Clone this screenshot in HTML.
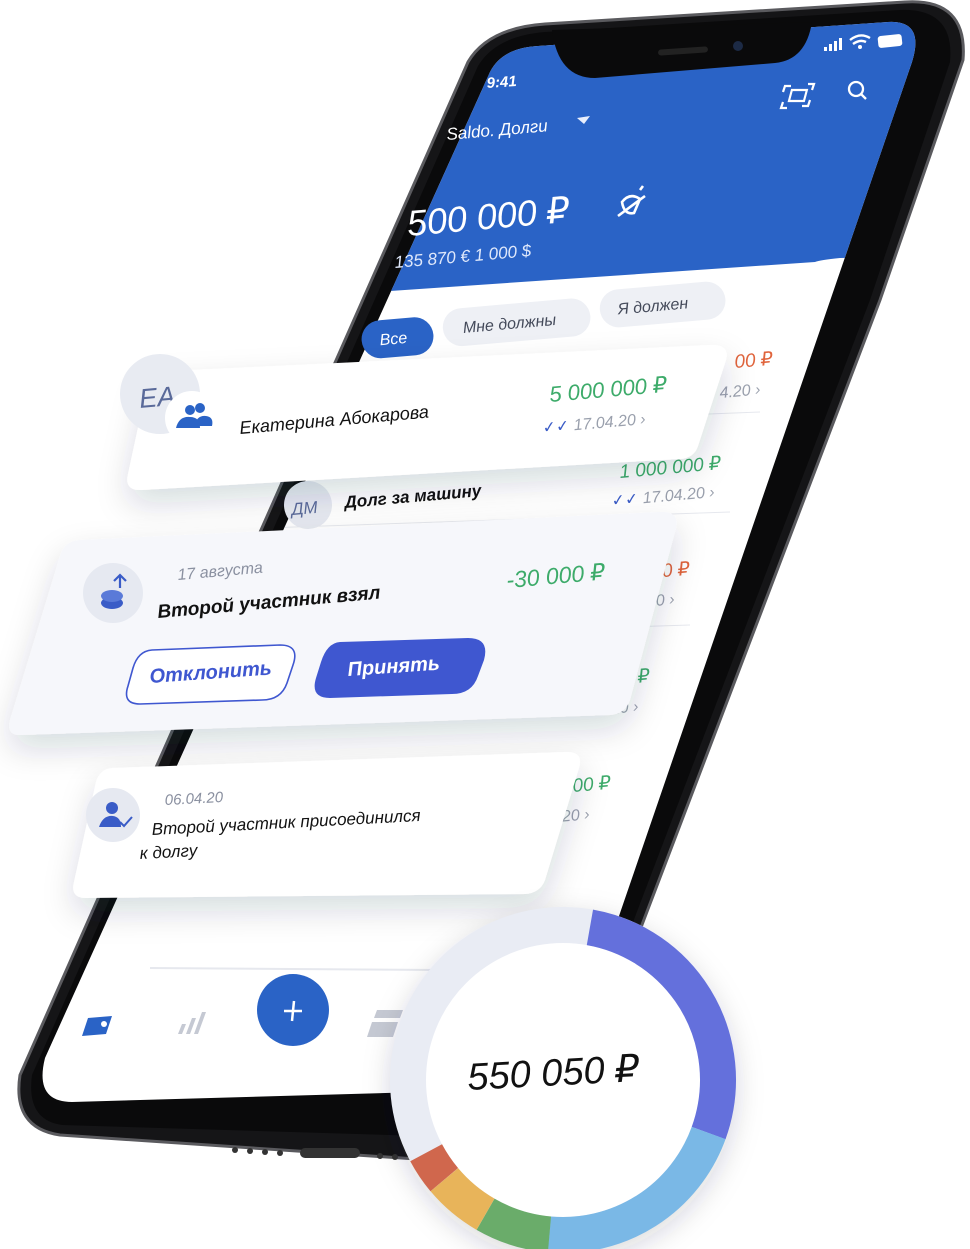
<!DOCTYPE html>
<html><head><meta charset="utf-8"><style>
html,body{margin:0;padding:0;background:#fff;width:970px;height:1249px;overflow:hidden}
svg text{font-family:"Liberation Sans","DejaVu Sans",sans-serif;font-style:italic}
</style></head><body>
<svg width="970" height="1249" viewBox="0 0 970 1249" xmlns="http://www.w3.org/2000/svg">
<defs>
<filter id="sh" x="-20%" y="-30%" width="140%" height="170%"><feDropShadow dx="0" dy="14" stdDeviation="16" flood-color="#1a2040" flood-opacity="0.16"/></filter>
<filter id="sh2" x="-20%" y="-20%" width="140%" height="140%"><feDropShadow dx="0" dy="8" stdDeviation="14" flood-color="#1a2040" flood-opacity="0.18"/></filter>
<clipPath id="scr"><path d="M490,72 Q502,48 538,46 L888,22 Q925,20 912,62 L560,1088 L72,1102 Q34,1102 45,1058 Z"/></clipPath>
</defs>
<path d="M468,62 Q488,28 545,24 L905,2 Q968,-2 963,60 L880,300 L640,930 L565,1150 Q555,1168 520,1166 L60,1135 Q12,1128 20,1075 Z" fill="#151517" stroke="#5a5a5e" stroke-width="3"/>
<path d="M478,66 Q496,36 545,32 L900,10 Q955,8 950,62 L870,300 L630,930 L555,1140 L62,1125 Q26,1120 32,1075 Z" fill="#0a0a0b"/>
<g fill="#333">
<circle cx="235" cy="1150" r="3"/><circle cx="250" cy="1151" r="3"/><circle cx="265" cy="1152" r="3"/><circle cx="280" cy="1153" r="3"/><rect x="300" y="1148" width="60" height="10" rx="5"/><circle cx="380" cy="1156" r="3"/><circle cx="395" cy="1157" r="3"/>
</g>
<g clip-path="url(#scr)">
<rect x="0" y="0" width="970" height="1249" fill="#ffffff"/>
<path d="M0,0 L970,0 L970,255 L840,258 Q820,260 815,262 L375,292 Q355,294 340,310 L0,330 Z" fill="#2a63c6"/>
<line x1="300" y1="430" x2="760" y2="412" stroke="#e6e8ee"/>
<line x1="265" y1="528" x2="730" y2="512" stroke="#e6e8ee"/>
<line x1="230" y1="640" x2="690" y2="625" stroke="#e6e8ee"/>
<line x1="150" y1="968" x2="440" y2="970" stroke="#e6e8ee" stroke-width="2"/>
</g>
<path d="M552,30 Q558,78 595,78 L775,63 Q806,60 812,22 Z" fill="#0a0a0b"/>
<rect x="658" y="48" width="50" height="6" rx="3" fill="#222" transform="rotate(-4 683 51)"/>
<circle cx="738" cy="46" r="5" fill="#1c2a45"/>
<text x="487" y="88" fill="#fff" font-size="15" font-weight="bold" transform="rotate(-4 487 88)">9:41</text>
<g fill="#fff"><rect x="824" y="47" width="3" height="4"/><rect x="829" y="44" width="3" height="7"/><rect x="834" y="41" width="3" height="10"/><rect x="839" y="38" width="3" height="12"/></g>
<path d="M850,40 Q860,32 870,38 M853,44 Q860,39 866,42" stroke="#fff" stroke-width="2.4" fill="none"/><circle cx="860" cy="47" r="2" fill="#fff"/>
<rect x="878" y="35" width="24" height="12" rx="3" fill="#fff" transform="rotate(-6 890 41)"/>
<g stroke="#fff" stroke-width="2.2" fill="none"><path d="M783,92 l2,-6 h6 M808,84 h6 l-2,6 M810,100 l-2,6 h-6 M787,108 h-6 l2,-6"/><rect x="791" y="90" width="15" height="11" transform="skewX(-15) translate(25 0)"/></g>
<circle cx="856" cy="89" r="7" stroke="#fff" stroke-width="2.3" fill="none"/><line x1="861" y1="94" x2="866" y2="99" stroke="#fff" stroke-width="2.3"/>
<text x="447" y="140" fill="#fff" font-size="17" transform="rotate(-5 447 140)">Saldo. Долги</text>
<path d="M577,118 L590,116 L584,124 Z" fill="#e8eefc"/>
<text x="408" y="236" fill="#fff" font-size="36" transform="rotate(-5 408 236)">500 000 ₽</text>
<g stroke="#fff" stroke-width="2.6" fill="none"><path d="M622,202 q8,-10 18,-3 l-6,14 q-10,2 -12,-11 z"/><line x1="618" y1="216" x2="645" y2="196"/><line x1="640" y1="190" x2="643" y2="186"/></g>
<text x="395" y="268" fill="#dfe8fb" font-size="17" transform="rotate(-5 395 268)">135 870 €   1 000 $</text>
<g transform="rotate(-5 520 315)">
<rect x="360" y="308" width="72" height="38" rx="19" fill="#2a63c6"/>
<text x="378" y="333" fill="#fff" font-size="16">Все</text>
<rect x="442" y="303" width="148" height="38" rx="19" fill="#eef0f5"/>
<text x="462" y="328" fill="#444a5a" font-size="16">Мне должны</text>
<rect x="600" y="298" width="126" height="38" rx="19" fill="#eef0f5"/>
<text x="618" y="323" fill="#444a5a" font-size="16">Я должен</text>
</g>
<g font-size="19">
<text x="735" y="368" fill="#e0643c" transform="rotate(-5 735 368)">00 ₽</text>
<text x="720" y="398" fill="#9aa0ad" font-size="16" transform="rotate(-5 720 398)">4.20  ›</text>
<text x="620" y="478" fill="#3dab6a" transform="rotate(-5 620 478)">1 000 000 ₽</text>
<text x="612" y="506" fill="#9aa0ad" font-size="16" transform="rotate(-5 612 506)"><tspan fill="#3a5cc7">✓✓</tspan> 17.04.20  ›</text>
<circle cx="308" cy="505" r="24" fill="#e6e9f1"/>
<text x="292" y="515" fill="#5a6a9a" font-size="17" transform="rotate(-5 292 515)">ДМ</text>
<text x="345" y="508" fill="#111" font-size="17" font-weight="bold" transform="rotate(-5 345 508)">Долг за машину</text>
<text x="652" y="578" fill="#e0643c" transform="rotate(-5 652 578)">00 ₽</text>
<text x="643" y="607" fill="#9aa0ad" font-size="16" transform="rotate(-5 643 607)">.20  ›</text>
<text x="612" y="685" fill="#3dab6a" transform="rotate(-5 612 685)">00 ₽</text>
<text x="598" y="715" fill="#9aa0ad" font-size="16" transform="rotate(-5 598 715)">4.20  ›</text>
<text x="573" y="792" fill="#3dab6a" transform="rotate(-5 573 792)">00 ₽</text>
<text x="558" y="822" fill="#9aa0ad" font-size="16" transform="rotate(-5 558 822)">.20  ›</text>
</g>
<path d="M88,1018 L112,1016 L106,1034 L82,1036 Z" fill="#2a63c6"/><circle cx="104" cy="1024" r="3" fill="#fff"/>
<g fill="#c5c9d3"><path d="M178,1034 l4,-10 h4 l-4,10 z M186,1034 l6,-16 h4 l-6,16 z M194,1034 l8,-22 h4 l-8,22 z"/></g>
<circle cx="293" cy="1010" r="36" fill="#2a63c6"/>
<path d="M284,1011 h18 M294,1001 l-2,20" stroke="#fff" stroke-width="2.5"/>
<path d="M374,1018 l3,-8 h26 l-3,8 z M372,1022 h26 l-5,15 h-26 z" fill="#c5c9d3"/>
<g filter="url(#sh)">
<path d="M150,372 L710,345 Q730,344 726,360 L698,446 Q694,458 680,459 L142,490 Q124,491 128,474 Z" fill="#fff"/>
</g>
<circle cx="160" cy="394" r="40" fill="#e8ebf2"/>
<text x="140" y="408" fill="#5a6a9a" font-size="27" transform="rotate(-5 140 408)">EA</text>
<circle cx="192" cy="418" r="27" fill="#fff"/>
<g fill="#2a63c6"><circle cx="190" cy="410" r="5"/><circle cx="200" cy="408" r="5"/><path d="M176,428 q3,-12 14,-11 q10,0 10,11 z M194,426 q3,-11 12,-10 q8,1 6,10 z"/></g>
<text x="240" y="434" fill="#111" font-size="18" transform="rotate(-5 240 434)">Екатерина Абокарова</text>
<text x="550" y="402" fill="#3dab6a" font-size="22" transform="rotate(-5 550 402)">5 000 000 ₽</text>
<text x="543" y="433" fill="#9aa0ad" font-size="16" transform="rotate(-5 543 433)"><tspan fill="#3a5cc7">✓✓</tspan>  17.04.20  ›</text>
<g filter="url(#sh)">
<path d="M80,540 L660,512 Q680,511 676,528 L630,700 Q625,714 610,715 L22,735 Q6,736 10,720 L60,556 Q64,541 80,540 Z" fill="#f6f7fb"/>
</g>
<circle cx="113" cy="593" r="30" fill="#e6e9f1"/>
<ellipse cx="112" cy="603" rx="11" ry="6" fill="#3a5cc7"/><ellipse cx="112" cy="596" rx="11" ry="6" fill="#5a7ad8"/>
<path d="M120,588 l0,-12 M114,581 l6,-6 l6,6" stroke="#3a5cc7" stroke-width="2.2" fill="none"/>
<text x="178" y="580" fill="#8a90a0" font-size="16" transform="rotate(-5 178 580)">17 августа</text>
<text x="158" y="618" fill="#111" font-size="19" font-weight="bold" transform="rotate(-5 158 618)">Второй участник взял</text>
<text x="507" y="588" fill="#3dab6a" font-size="23" transform="rotate(-5 507 588)">-30 000 ₽</text>
<path d="M152,650 L280,645 Q300,645 293,665 L287,683 Q281,700 262,700 L140,704 Q122,704 128,686 L133,668 Q138,651 152,650 Z" fill="#fff" stroke="#3f57d0" stroke-width="1.6"/>
<text x="150" y="683" fill="#3f57d0" font-size="20" font-weight="bold" transform="rotate(-4 150 683)">Отклонить</text>
<path d="M340,642 L468,638 Q490,638 484,660 L478,676 Q472,694 452,694 L330,698 Q310,698 316,678 L321,662 Q327,643 340,642 Z" fill="#3f57d0"/>
<text x="348" y="676" fill="#fff" font-size="20" font-weight="bold" transform="rotate(-4 348 676)">Принять</text>
<g filter="url(#sh)">
<path d="M112,768 L565,752 Q584,751 579,768 L545,880 Q540,893 525,894 L86,898 Q70,898 74,882 L96,782 Q100,769 112,768 Z" fill="#fff"/>
</g>
<circle cx="113" cy="815" r="27" fill="#e6e9f1"/>
<circle cx="112" cy="808" r="6" fill="#3a5cc7"/><path d="M99,827 q4,-12 14,-11 q8,1 8,11 z" fill="#3a5cc7"/><path d="M120,822 l4,4 l8,-9" stroke="#3a5cc7" stroke-width="2" fill="none"/>
<text x="165" y="805" fill="#8a90a0" font-size="15" transform="rotate(-3 165 805)">06.04.20</text>
<text x="152" y="835" fill="#111" font-size="17" transform="rotate(-3 152 835)">Второй участник присоединился</text>
<text x="140" y="859" fill="#111" font-size="17" transform="rotate(-3 140 859)">к долгу</text>
<g filter="url(#sh2)"><circle cx="563" cy="1080" r="172" fill="#fff"/></g>
<g fill="none" stroke-width="36">
<circle cx="563" cy="1080" r="155" stroke="#e9ecf4"/>
<circle cx="563" cy="1080" r="155" stroke="#6470dc" stroke-dasharray="270.5 1000" transform="rotate(-80 563 1080)"/>
<circle cx="563" cy="1080" r="155" stroke="#7ab8e6" stroke-dasharray="203 1000" transform="rotate(20 563 1080)"/>
<circle cx="563" cy="1080" r="155" stroke="#6aac6a" stroke-dasharray="67.6 1000" transform="rotate(95 563 1080)"/>
<circle cx="563" cy="1080" r="155" stroke="#e8b45a" stroke-dasharray="54 1000" transform="rotate(120 563 1080)"/>
<circle cx="563" cy="1080" r="155" stroke="#d0674d" stroke-dasharray="32.5 1000" transform="rotate(140 563 1080)"/>
</g>
<text x="468" y="1090" fill="#111" font-size="38" transform="rotate(-3 468 1090)">550 050 ₽</text>
</svg>
</body></html>
